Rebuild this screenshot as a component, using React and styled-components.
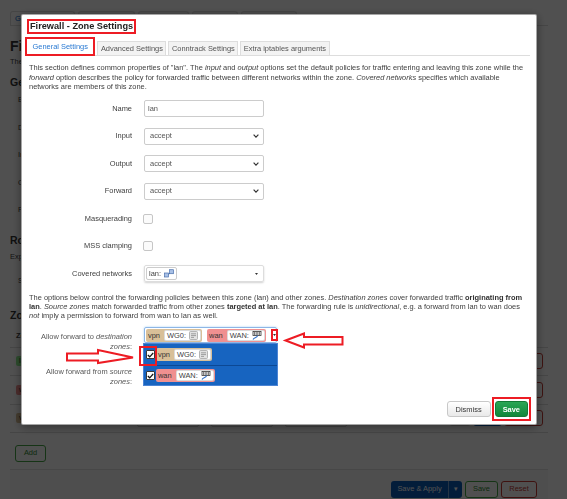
import React from 'react';
import styled, { createGlobalStyle } from 'styled-components';

const RED = '#ed1c24';

const GlobalStyle = createGlobalStyle`
  * { box-sizing: border-box; }
  html, body { margin: 0; padding: 0; overflow: hidden; background: #fff; }
  body {
    font-family: "Liberation Sans", Arial, sans-serif;
    font-size: 7.45px;
    line-height: 9.2px;
    color: #404040;
  }
`;

/* ---------- page behind the modal ---------- */

const Page = styled.div`
  width: 538px;
  height: 499px;
  margin-left: 10px;
  display: flex;
  flex-direction: column;
`;

const TopTabs = styled.div`
  display: flex;
  gap: 3px;
  margin-top: 11px;
  height: 15px;
  border-bottom: 1px solid #ddd;
`;

const TopTab = styled.div`
  padding: 0 4px;
  line-height: 13px;
  border: 1px solid #ddd;
  border-bottom: 0;
  border-radius: 3px 3px 0 0;
  background: ${p => (p.$active ? '#fff' : '#f5f5f5')};
  color: ${p => (p.$active ? '#0069d6' : '#404040')};
`;

const PageTitle = styled.h2`
  margin: 12px 0 0;
  font-size: 14px;
  line-height: 16px;
  font-weight: bold;
  color: #333;
`;

const PageText = styled.p`
  margin: ${p => p.$top}px 0 0;
  line-height: 9px;
`;

const SectionTitle = styled.h3`
  margin: ${p => p.$top}px 0 0;
  font-size: 10.5px;
  line-height: 12px;
  font-weight: bold;
  color: #333;
`;

const BgForm = styled.div`
  display: flex;
  flex-direction: column;
  gap: 10.5px;
  margin-top: ${p => p.$top}px;
`;

const BgRow = styled.div`
  display: grid;
  grid-template-columns: 124px 120px;
  column-gap: 12px;
  align-items: center;
  height: 17px;
  padding-left: 8px;
`;

const BgField = styled.div`
  height: 17px;
  border: 1px solid #ccc;
  border-radius: 2px;
`;

const ZoneTable = styled.div`
  margin-top: 4px;
  display: flex;
  flex-direction: column;
`;

const ZoneHead = styled.div`
  display: grid;
  grid-template-columns: 121px 73px 74px 74px 1fr;
  align-items: center;
  height: 23px;
  padding-left: 6px;
  border-bottom: 1px solid #ddd;
  font-weight: bold;
`;

const ZoneRow = styled.div`
  display: flex;
  align-items: center;
  height: 28.5px;
  padding: 0 5px 0 6px;
  border-bottom: 1px solid #ddd;
`;

const ZoneCell = styled.div`
  display: flex;
  align-items: center;
  gap: 3px;
  width: 121px;
`;

const Badge = styled.span`
  padding: 0 3px;
  line-height: 10px;
  border-radius: 2px;
  background: ${p => p.$color};
  color: #333;
`;

const RowSelect = styled.div`
  width: 62px;
  height: 18px;
  margin-right: 12px;
  border: 1px solid #ccc;
  border-radius: 2px;
`;

const RowButtons = styled.div`
  display: flex;
  gap: 2px;
  margin-left: auto;
`;

const BgButton = styled.span`
  display: inline-flex;
  align-items: center;
  justify-content: center;
  width: ${p => p.$w}px;
  height: ${p => p.$h || 16}px;
  border-radius: 3px;
  border: 1px solid ${p => p.$line};
  background: ${p => p.$bg || '#fff'};
  color: ${p => p.$ink};
`;

const AddButton = styled(BgButton)`
  margin: 11.5px 0 0 5px;
`;

const ActionBar = styled.div`
  flex: 1;
  margin-top: 7px;
  display: flex;
  justify-content: flex-end;
  align-items: flex-start;
  gap: 3px;
  padding: 11px 11px 0 0;
  border-top: 1px solid #e2e2e2;
  background: #f9f9f9;
`;

const SplitButton = styled.div`
  display: flex;
  height: 17px;
  border-radius: 3px;
  overflow: hidden;
  background: #0a5cb8;
  color: #fff;
`;

const SplitPart = styled.span`
  display: flex;
  align-items: center;
  justify-content: center;
  width: ${p => p.$w}px;
  border-left: ${p => (p.$divide ? '1px solid rgba(255,255,255,.45)' : '0')};
`;

/* ---------- modal ---------- */

const Overlay = styled.div`
  position: fixed;
  inset: 0;
  background: rgba(0, 0, 0, 0.686);
  padding: 14px 0 0 21px;
`;

const Modal = styled.div`
  position: relative;
  width: 516px;
  background: #fff;
  border: 1px solid rgba(0, 0, 0, 0.35);
  border-radius: 2px;
  box-shadow: 0 2px 10px rgba(0, 0, 0, 0.4);
  padding: 4px 6px 3px 4px;
`;

const ModalTitle = styled.h4`
  margin: 0 0 0 1px;
  font-size: 9.2px;
  line-height: 11px;
  font-weight: bold;
  color: #222;
`;

const Marked = styled.span`
  display: inline-block;
  border: 2px solid ${RED};
  padding: ${p => p.$pad || '0 1px'};
`;

const TabBar = styled.div`
  display: flex;
  align-items: flex-end;
  gap: 2px;
  height: 19px;
  margin: 3px 0 0 -1px;
  border-bottom: 1px solid #ddd;
`;

const Tab = styled.div`
  height: ${p => (p.$active ? 19 : 14)}px;
  margin-bottom: ${p => (p.$active ? -1 : 0)}px;
  padding: 0 ${p => (p.$active ? 5.5 : 2.5)}px;
  line-height: ${p => (p.$active ? 15 : 13)}px;
  border: ${p => (p.$active ? `2px solid ${RED}` : '1px solid #ddd')};
  border-bottom-width: ${p => (p.$active ? 2 : 0)}px;
  background: ${p => (p.$active ? '#fff' : '#f3f3f3')};
  color: ${p => (p.$active ? '#2a7ad3' : '#555')};
  white-space: nowrap;
`;

const Description = styled.p`
  margin: ${p => p.$top}px 0 0 3px;
  line-height: 9.2px;
  color: #404040;
  strong { color: #333; }
`;

const Form = styled.div`
  display: grid;
  grid-template-columns: 106px 1fr;
  grid-auto-rows: 17px;
  column-gap: 12px;
  row-gap: 10.5px;
  margin-top: 9px;
  align-items: center;
`;

const Label = styled.label`
  text-align: right;
  color: #404040;
`;

const TextInput = styled.div`
  width: 120px;
  height: 17px;
  padding: 0 3px;
  line-height: 15px;
  border: 1px solid #ccc;
  border-radius: 2px;
  color: #555;
`;

const Select = styled.div`
  width: 120px;
  height: 17px;
  display: flex;
  align-items: center;
  justify-content: space-between;
  padding: 0 4px 0 5px;
  border: 1px solid #ccc;
  border-radius: 2px;
  color: #555;
`;

const Checkbox = styled.span`
  width: 10px;
  height: 10px;
  margin-left: -1px;
  border: 1px solid #c6c6c6;
  border-radius: 2px;
  background: #fbfbfb;
`;

const NetSelect = styled.div`
  width: 120px;
  height: 17px;
  display: flex;
  align-items: center;
  justify-content: space-between;
  padding: 0 5px 0 1px;
  border: 1px solid #ddd;
  border-radius: 2px;
  box-shadow: 0 1px 2px rgba(0, 0, 0, 0.18);
`;

const Iface = styled.span`
  display: inline-flex;
  align-items: center;
  gap: 3px;
  height: ${p => p.$h || 11}px;
  padding: 0 2px 0 2px;
  background: #fff;
  border: 1px solid ${p => p.$line || 'rgba(0,0,0,.14)'};
  border-radius: 2px;
  color: #444;
  white-space: nowrap;
`;

const ForwardForm = styled.div`
  display: grid;
  grid-template-columns: 106px 1fr;
  column-gap: 12px;
  row-gap: 10px;
  margin-top: 7px;
  align-items: start;
`;

const ForwardLabel = styled(Label)`
  padding: 5px 0 0 6px;
  line-height: 10px;
  color: #585858;
`;

const MultiSelect = styled.div`
  position: relative;
  width: 133px;
  height: 16px;
  display: flex;
  align-items: center;
  gap: 5px;
  padding: 0 1px;
  border: 1px solid ${p => (p.$open ? '#8db6e6' : '#ccc')};
  border-radius: 2px;
  box-shadow: ${p => (p.$open ? '0 0 2px rgba(82,168,236,.6)' : 'none')};
`;

const Zone = styled.span`
  display: inline-flex;
  align-items: center;
  gap: 4px;
  height: 13px;
  padding: 0 1px 0 2px;
  border-radius: 2px;
  background: ${p => p.$color};
  color: #333;
  white-space: nowrap;
`;

const OpenToggle = styled.span`
  margin-left: auto;
  width: 12px;
  height: 12px;
  display: flex;
  align-items: center;
  justify-content: center;
  border: 2px solid ${RED};
  background: #fff;
`;

const DropList = styled.div`
  position: absolute;
  top: calc(100% + 1px);
  left: -2px;
  right: -2px;
  z-index: 2;
  background: #1764c0;
  border: 1px solid #4c84d4;
`;

const ListRow = styled.div`
  display: flex;
  align-items: center;
  gap: 1px;
  height: ${p => p.$h}px;
  padding-left: 2px;
  border-top: ${p => (p.$sep ? '1px solid #0c4894' : '0')};
`;

const ListCheck = styled.span`
  position: relative;
  width: 9px;
  height: 9px;
  display: flex;
  align-items: center;
  justify-content: center;
  background: #fff;
  border: 1px solid #3a3a3a;
  border-radius: 1px;

  &::after {
    content: '';
    display: ${p => (p.$marked ? 'block' : 'none')};
    position: absolute;
    left: -8px;
    right: -3px;
    top: -5px;
    bottom: -8px;
    border: 2px solid ${RED};
  }
`;

const Footer = styled.div`
  display: flex;
  justify-content: flex-end;
  align-items: center;
  gap: 1px;
  margin: 10px -1px 0 0;
`;

const Button = styled.button`
  font: inherit;
  height: 16px;
  padding: 0 ${p => (p.$primary ? 7 : 8)}px;
  border-radius: 3px;
  border: 1px solid ${p => (p.$primary ? '#137a35' : '#c8c8c8')};
  background: ${p =>
    p.$primary
      ? 'linear-gradient(#2aa655, #11873a)'
      : 'linear-gradient(#ffffff, #e9e9e9)'};
  color: ${p => (p.$primary ? '#fff' : '#333')};
  font-weight: ${p => (p.$primary ? 'bold' : 'normal')};
  display: block;
`;

const Annotation = styled.svg`
  position: absolute;
  left: ${p => p.$x}px;
  top: ${p => p.$y}px;
  overflow: visible;
`;

/* ---------- small drawings ---------- */

const Chevron = () => (
  <svg width="6" height="4" viewBox="0 0 6 4">
    <path d="M0.6 0.7 L3 3.1 L5.4 0.7" stroke="#333" strokeWidth="1.2" fill="none" />
  </svg>
);

const Caret = () => (
  <svg width="3" height="2" viewBox="0 0 3 2">
    <path d="M0 0 H3 L1.5 2 Z" fill="#333" />
  </svg>
);

const TunnelIcon = () => (
  <svg width="9" height="9" viewBox="0 0 9 9">
    <rect x="0.5" y="0.5" width="8" height="8" rx="1" fill="#e2e2e2" stroke="#a5a5a5" strokeWidth="0.8" />
    <path d="M2 2.8h5M2 4.6h5M2 6.4h3" stroke="#8c8c8c" strokeWidth="0.8" />
  </svg>
);

const EthernetIcon = () => (
  <svg width="10" height="9" viewBox="0 0 10 9">
    <rect x="1" y="0.5" width="8" height="4" fill="#fff" stroke="#333" strokeWidth="0.8" />
    <path d="M2.6 1v3M4.2 1v3M5.8 1v3M7.4 1v3" stroke="#333" strokeWidth="0.7" />
    <path d="M5.5 4.6 C5.5 7, 2.5 6, 1 8.5" stroke="#2f6fc6" strokeWidth="1.1" fill="none" />
  </svg>
);

const BridgeIcon = () => (
  <svg width="10" height="9" viewBox="0 0 10 9">
    <rect x="0.5" y="4" width="4" height="4" fill="#a9c1e6" stroke="#4a70ad" strokeWidth="0.7" />
    <rect x="5.5" y="0.7" width="4" height="4" fill="#a9c1e6" stroke="#4a70ad" strokeWidth="0.7" />
    <path d="M4.3 5.3 L6 4.3" stroke="#4a70ad" strokeWidth="0.8" />
  </svg>
);

const Tick = () => (
  <svg width="7" height="6" viewBox="0 0 7 6">
    <path d="M0.8 3 L2.7 4.8 L6.2 1" stroke="#111" strokeWidth="1.2" fill="none" />
  </svg>
);

const VPN = '#d8bf98';
const WAN = '#f09090';
const LAN = '#90f090';

/* ---------- app ---------- */

export default function App() {
  return (
    <>
      <GlobalStyle />
      <Page>
        <TopTabs>
          <TopTab $active>General Settings</TopTab>
          <TopTab>Port Forwards</TopTab>
          <TopTab>Traffic Rules</TopTab>
          <TopTab>NAT Rules</TopTab>
          <TopTab>Custom Rules</TopTab>
        </TopTabs>
        <PageTitle>Firewall - Zone Settings</PageTitle>
        <PageText $top={2.5}>
          The firewall creates zones over your network interfaces to control network traffic flow.
        </PageText>
        <SectionTitle $top={10.5}>General Settings</SectionTitle>
        <BgForm $top={3.5}>
          <BgRow><span>Enable SYN-flood protection</span><BgField /></BgRow>
          <BgRow><span>Drop invalid packets</span><BgField /></BgRow>
          <BgRow><span>Input</span><BgField /></BgRow>
          <BgRow><span>Output</span><BgField /></BgRow>
          <BgRow><span>Forward</span><BgField /></BgRow>
        </BgForm>
        <SectionTitle $top={15.5}>Routing/NAT Offloading</SectionTitle>
        <PageText $top={5.5}>Experimental feature. Not fully compatible with QoS/SQM.</PageText>
        <BgForm $top={11.5}>
          <BgRow><span>Software flow offloading</span><BgField /></BgRow>
        </BgForm>
        <SectionTitle $top={19.5}>Zones</SectionTitle>
        <ZoneTable>
          <ZoneHead>
            <span>Zone ⇒ Forwardings</span>
            <span>Input</span>
            <span>Output</span>
            <span>Forward</span>
            <span>Masquerading</span>
          </ZoneHead>
          {[
            ['lan', LAN, ['vpn', 'wan']],
            ['wan', WAN, []],
            ['vpn', VPN, []],
          ].map(([name, color, fwd]) => (
            <ZoneRow key={name}>
              <ZoneCell>
                <Badge $color={color}>{name}</Badge>
                <span>⇒</span>
                {fwd.length ? fwd.map(f => <Badge key={f} $color={f === 'wan' ? WAN : VPN}>{f}</Badge>) : <Badge $color="#eee">REJECT</Badge>}
              </ZoneCell>
              <RowSelect />
              <RowSelect />
              <RowSelect />
              <RowButtons>
                <BgButton $w={22} $line="#ccc" $bg="#f2f2f2" $ink="#333">⇅</BgButton>
                <BgButton $w={29} $line="#0a5cb8" $bg="#0a5cb8" $ink="#fff">Edit</BgButton>
                <BgButton $w={39} $line="#c43c35" $ink="#c43c35">Delete</BgButton>
              </RowButtons>
            </ZoneRow>
          ))}
        </ZoneTable>
        <AddButton $w={31} $h={17} $line="#46a546" $ink="#2f8a2f">Add</AddButton>
        <ActionBar>
          <SplitButton>
            <SplitPart $w={57}>Save &amp; Apply</SplitPart>
            <SplitPart $w={14} $divide>▾</SplitPart>
          </SplitButton>
          <BgButton $w={33} $h={17} $line="#46a546" $ink="#2f8a2f">Save</BgButton>
          <BgButton $w={36} $h={17} $line="#c43c35" $ink="#c43c35">Reset</BgButton>
        </ActionBar>
      </Page>

      <Overlay>
        <Modal>
          <ModalTitle>
            <Marked>Firewall - Zone Settings</Marked>
          </ModalTitle>

          <TabBar>
            <Tab $active>General Settings</Tab>
            <Tab>Advanced Settings</Tab>
            <Tab>Conntrack Settings</Tab>
            <Tab>Extra iptables arguments</Tab>
          </TabBar>

          <Description $top={7.4}>
            This section defines common properties of "lan". The <em>input</em> and <em>output</em> options
            set the default policies for traffic entering and leaving this zone while the <em>forward</em> option
            describes the policy for forwarded traffic between different networks within the zone.{' '}
            <em>Covered networks</em> specifies which available networks are members of this zone.
          </Description>

          <Form>
            <Label>Name</Label>
            <TextInput>lan</TextInput>

            <Label>Input</Label>
            <Select>accept<Chevron /></Select>

            <Label>Output</Label>
            <Select>accept<Chevron /></Select>

            <Label>Forward</Label>
            <Select>accept<Chevron /></Select>

            <Label>Masquerading</Label>
            <Checkbox />

            <Label>MSS clamping</Label>
            <Checkbox />

            <Label>Covered networks</Label>
            <NetSelect>
              <Iface $h={13} $line="#ccc">lan: <BridgeIcon /></Iface>
              <Caret />
            </NetSelect>
          </Form>

          <Description $top={10.5}>
            The options below control the forwarding policies between this zone (lan) and other zones.{' '}
            <em>Destination zones</em> cover forwarded traffic <strong>originating from lan</strong>.{' '}
            <em>Source zones</em> match forwarded traffic from other zones <strong>targeted at lan</strong>.
            The forwarding rule is <em>unidirectional</em>, e.g. a forward from lan to wan does <em>not</em> imply
            a permission to forward from wan to lan as well.
          </Description>

          <ForwardForm>
            <ForwardLabel>Allow forward to <em>destination zones</em>:</ForwardLabel>
            <MultiSelect $open>
              <Zone $color={VPN}>vpn <Iface>WG0: <TunnelIcon /></Iface></Zone>
              <Zone $color={WAN}>wan <Iface>WAN: <EthernetIcon /></Iface></Zone>
              <OpenToggle><Caret /></OpenToggle>
              <DropList>
                <ListRow $h={21}>
                  <ListCheck $marked><Tick /></ListCheck>
                  <Zone $color={VPN}>vpn <Iface>WG0: <TunnelIcon /></Iface></Zone>
                </ListRow>
                <ListRow $h={20} $sep>
                  <ListCheck><Tick /></ListCheck>
                  <Zone $color={WAN}>wan <Iface>WAN: <EthernetIcon /></Iface></Zone>
                </ListRow>
              </DropList>
            </MultiSelect>

            <ForwardLabel>Allow forward from <em>source zones</em>:</ForwardLabel>
            <MultiSelect>
              <Zone $color={LAN}>lan</Zone>
            </MultiSelect>
          </ForwardForm>

          <Footer>
            <Button>Dismiss</Button>
            <Marked $pad="2px 1px">
              <Button $primary>Save</Button>
            </Marked>
          </Footer>

          <Annotation $x={44} $y={334} width="68" height="15" viewBox="0 0 68 15">
            <polygon
              points="1,4.5 32,4.5 32,1 67,8.5 32,14 32,11.5 1,11.5"
              fill="#fff"
              stroke={RED}
              strokeWidth="2"
              strokeLinejoin="miter"
            />
          </Annotation>
          <Annotation $x={262} $y={317} width="60" height="17" viewBox="0 0 60 17">
            <polygon
              points="1.5,8.5 20,1.5 20,5 58.5,5 58.5,12.5 20,12.5 20,15.5"
              fill="#fff"
              stroke={RED}
              strokeWidth="2"
              strokeLinejoin="miter"
            />
          </Annotation>
        </Modal>
      </Overlay>
    </>
  );
}
